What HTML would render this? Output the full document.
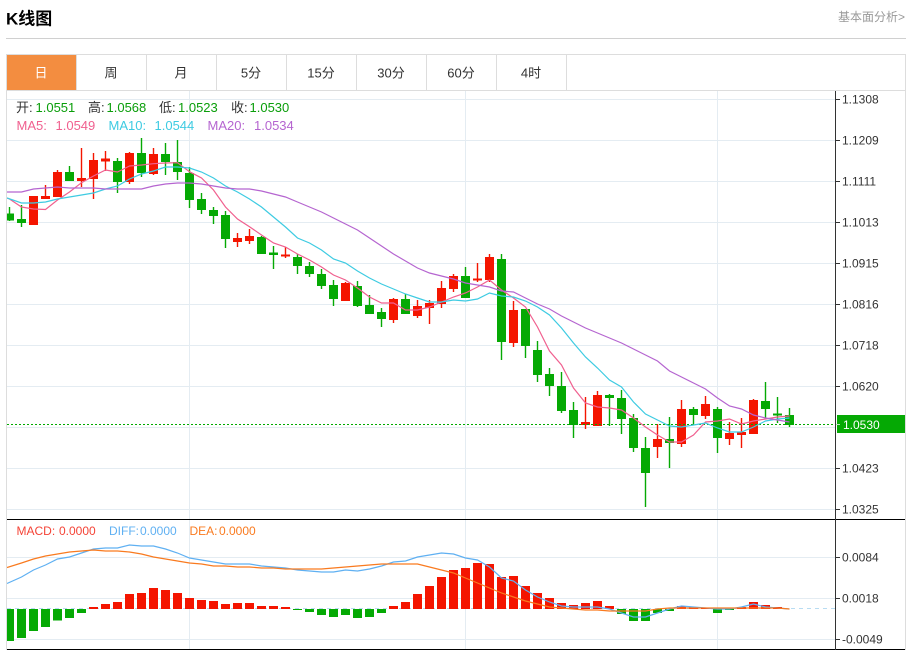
<!DOCTYPE html>
<html><head><meta charset="utf-8"><style>
html,body{margin:0;padding:0;background:#fff;width:909px;height:650px;overflow:hidden}
svg{position:absolute;left:0;top:0}
text{font-family:"Liberation Sans","Noto Sans CJK SC",sans-serif;font-size:12px}
.l{font-size:13px}
.ax{fill:#333}
.tab{font-size:13px;fill:#333;text-anchor:middle}
</style></head><body>
<svg width="909" height="650" viewBox="0 0 909 650" xmlns="http://www.w3.org/2000/svg">
<defs><clipPath id="c"><rect x="7" y="91" width="828" height="559"/></clipPath></defs>
<text x="6" y="24.500" style="font-size:17px;font-weight:bold" fill="#000">K线图</text>
<text x="905" y="21" text-anchor="end" fill="#999">基本面分析&gt;</text>
<path d="M6 38.500H906" stroke="#d0d0d0"/>
<rect x="6.500" y="54.500" width="899" height="595" fill="#fff" stroke="#ddd"/>
<rect x="7" y="55" width="69" height="35" fill="#f38d40"/>
<path d="M76.500 55V90M146.500 55V90M216.500 55V90M286.500 55V90M356.500 55V90M426.500 55V90M496.500 55V90M566.500 55V90M7 90.500H905" stroke="#ddd" fill="none"/>
<text class="tab" x="41" y="77.500" style="fill:#fff">日</text>
<text class="tab" x="111" y="77.500">周</text>
<text class="tab" x="181" y="77.500">月</text>
<text class="tab" x="251" y="77.500">5分</text>
<text class="tab" x="321" y="77.500">15分</text>
<text class="tab" x="391" y="77.500">30分</text>
<text class="tab" x="461" y="77.500">60分</text>
<text class="tab" x="531" y="77.500">4时</text>
<path d="M7 99.500H836M7 140.500H836M7 181.500H836M7 222.500H836M7 263.500H836M7 304.500H836M7 345.500H836M7 386.500H836M7 427.500H836M7 468.500H836M7 509.500H836M7 557.500H836M7 598.500H836M7 639.500H836M189.500 91V649M465.500 91V649M717.500 91V649" stroke="#e4ecf2" fill="none"/>
<g clip-path="url(#c)">
<path stroke="#05a904" stroke-width="1.400" fill="none" d="M9.500 207V221M21.500 205V227M69.500 166V181M117.500 158V193M141.500 138V177M165.500 143V175M177.500 140V180M189.500 167V208M201.500 193V214M213.500 207V224M225.500 211V248M261.500 236V254M273.500 246V269M297.500 254V274M309.500 262V277M321.500 269V289M333.500 280V306M357.500 281V307M369.500 295V314M381.500 308V327M405.500 294V314M465.500 267V298M501.500 254V360M525.500 309V358M537.500 341V382M549.500 368V396M561.500 372V413M573.500 402V438M609.500 394V426M621.500 390V434M633.500 414V452M645.500 437V507M669.500 417V468M693.500 407V425M717.500 407V453M765.500 382V418M777.500 397V423M789.500 408V427"/>
<path stroke="#f41500" stroke-width="1.400" fill="none" d="M33.500 196V225M45.500 185V199M57.500 170V197M81.500 148V187M93.500 153V199M105.500 151V171M129.500 152V184M153.500 148V175M237.500 233V247M249.500 229V244M285.500 247V258M345.500 282V301M393.500 298V323M417.500 300V318M429.500 300V324M441.500 281V308M453.500 274V292M477.500 263V282M489.500 254V282M513.500 301V347M585.500 397V429M597.500 391V426M657.500 424V458M681.500 400V447M705.500 396V419M729.500 422V445M741.500 418V448M753.500 399V434"/>
<path stroke="#05a904" stroke-width="9" fill="none" d="M9.500 213.500V220.500M21.500 219V223M69.500 172V181M117.500 161V182M141.500 153V173M165.500 154V162M177.500 162V172M189.500 173V200M201.500 199V210M213.500 210V216M225.500 215V239M261.500 237V254M273.500 252.500V255M297.500 257V266M309.500 266V274M321.500 274V286M333.500 285V299M357.500 286V306M369.500 305V314M381.500 312V319M405.500 299V314M465.500 276V298M501.500 259V342M525.500 309V346M537.500 350V375M549.500 374V386M561.500 386V411M573.500 410V425M609.500 395V398M621.500 398V419M633.500 418V448M645.500 448V473M669.500 439V443M693.500 409V415M717.500 409V438M765.500 401V409M777.500 413.500V415.500M789.500 415V425"/>
<path stroke="#f41500" stroke-width="9" fill="none" d="M33.500 196V225M45.500 196V199M57.500 172V197M81.500 178V181M93.500 160V179M105.500 158.500V161.500M129.500 153V182M153.500 154V174M237.500 238V242M249.500 236V241M285.500 254.500V256.500M345.500 283V301M393.500 299V320M417.500 306V316M429.500 303V308M441.500 288V304M453.500 276V289M477.500 278.500V280.500M489.500 257V280M513.500 310V343M585.500 422V425M597.500 395V426M657.500 439V447M681.500 409V444M705.500 404V416M729.500 433V439M741.500 432V435M753.500 400V434"/>
<path d="M7 424.500H836" stroke="#0a0" stroke-dasharray="2 2"/>
<path fill="none" stroke="#f0608f" stroke-width="1.200" d="M7 198L9.500 199L21.500 207L33.500 209L45.500 209.500L57.500 200L69.500 192L81.500 182.700L93.500 176L105.500 170L117.500 172L129.500 166L141.500 165L153.500 163.700L165.500 163L177.500 162.700L189.500 171.700L201.500 178L213.500 190L225.500 207L237.500 219L249.500 226.700L261.500 235L273.500 243L285.500 247L297.500 254L309.500 260L321.500 267L333.500 275L345.500 280L357.500 288L369.500 297L381.500 303L393.500 303L405.500 310L417.500 310L429.500 307L441.500 302L453.500 297L465.500 293L477.500 287L489.500 280L501.500 290L513.500 298L525.500 307L537.500 327L549.500 351L561.500 365L573.500 388L585.500 403L597.500 407L609.500 408L621.500 410L633.500 418L645.500 427L657.500 435L669.500 442L681.500 442L693.500 435L705.500 422L717.500 421L729.500 419L741.500 424L753.500 421L765.500 419L777.500 417L789.500 416"/>
<path fill="none" stroke="#3ecbe2" stroke-width="1.200" d="M7 198L21.500 203L33.500 203L45.500 202L57.500 199L69.500 197L81.500 195L93.500 193L105.500 189L117.500 186L129.500 179L141.500 174L153.500 171L165.500 167L177.500 167L189.500 168L201.500 172L213.500 178L225.500 186L237.500 192L249.500 199L261.500 207L273.500 217L285.500 227L297.500 238L309.500 243L321.500 250L333.500 259L345.500 263L357.500 271L369.500 278L381.500 284L393.500 289L405.500 294L417.500 298L429.500 302L441.500 302L453.500 300L465.500 301L477.500 299L489.500 293L501.500 296L513.500 297L525.500 301L537.500 307L549.500 315L561.500 328L573.500 343L585.500 357L597.500 368L609.500 380L621.500 387L633.500 402L645.500 414L657.500 420L669.500 426L681.500 427L693.500 425L705.500 423L717.500 428L729.500 432L741.500 432L753.500 427L765.500 421L777.500 419L789.500 418"/>
<path fill="none" stroke="#b565d0" stroke-width="1.200" d="M7 192L21.500 192L33.500 189L45.500 188L57.500 187L69.500 188L81.500 188L93.500 188L105.500 189L117.500 189L129.500 189L141.500 189L153.500 186L165.500 184L177.500 183L189.500 183L201.500 184L213.500 186L225.500 188L237.500 189L249.500 189L261.500 191L273.500 194L285.500 197L297.500 202L309.500 207L321.500 212L333.500 218L345.500 224L357.500 230L369.500 238L381.500 246L393.500 254L405.500 261L417.500 268L429.500 273L441.500 276L453.500 279L465.500 283L477.500 285L489.500 287L501.500 291L513.500 292L525.500 298L537.500 304L549.500 309L561.500 316L573.500 322L585.500 328L597.500 333L609.500 338L621.500 343L633.500 349L645.500 355L657.500 361L669.500 371L681.500 377L693.500 383L705.500 389L717.500 398L729.500 406L741.500 409L753.500 415L765.500 418L777.500 420L789.500 422"/>
<path d="M7 608.500H836" stroke="#b8dcf2" stroke-dasharray="4 4"/>
<path stroke="#05a904" stroke-width="9" fill="none" d="M9.500 609V641M21.500 609V638M33.500 609V631M45.500 609V627M57.500 609V620.500M69.500 609V618M81.500 609V613M297.500 609V610M309.500 609V612M321.500 609V615M333.500 609V617M345.500 609V615M357.500 609V618M369.500 609V617M381.500 609V613M621.500 609V614M633.500 609V621M645.500 609V621M657.500 609V613M669.500 609V611M717.500 609V613M729.500 609V610"/>
<path stroke="#f41500" stroke-width="9" fill="none" d="M93.500 607V609M105.500 604V609M117.500 602V609M129.500 594V609M141.500 593V609M153.500 588V609M165.500 590V609M177.500 593V609M189.500 598V609M201.500 600V609M213.500 601V609M225.500 604V609M237.500 603V609M249.500 603V609M261.500 606V609M273.500 606V609M285.500 607V609M393.500 606V609M405.500 602V609M417.500 594V609M429.500 586V609M441.500 577V609M453.500 570V609M465.500 568V609M477.500 563V609M489.500 564V609M501.500 577V609M513.500 576V609M525.500 586V609M537.500 593V609M549.500 598V609M561.500 603V609M573.500 605V609M585.500 603V609M597.500 601V609M609.500 606V609M681.500 606V609M693.500 607V609M705.500 608V609M741.500 607V609M753.500 602V609M765.500 605V609M777.500 607V609"/>
<path fill="none" stroke="#5fb0f2" stroke-width="1.200" d="M7 583.500L21.500 577L33.500 570L45.500 565L57.500 559L69.500 557L81.500 553L93.500 549L105.500 548L117.500 548L129.500 545L141.500 546L153.500 546L165.500 549L177.500 553L189.500 558L201.500 560L213.500 562L225.500 564L237.500 564L249.500 564L261.500 566L273.500 567L285.500 568L297.500 570L309.500 571L321.500 572L333.500 572L345.500 570L357.500 571L369.500 569L381.500 566L393.500 562L405.500 561L417.500 557L429.500 555L441.500 553L453.500 554L465.500 558L477.500 560L489.500 567L501.500 578L513.500 581L525.500 590L537.500 597L549.500 602L561.500 606L573.500 607L585.500 607L597.500 607L609.500 609L621.500 613L633.500 617L645.500 617L657.500 613L669.500 609L681.500 606L693.500 607L705.500 608L717.500 609L729.500 609L741.500 607L753.500 604L765.500 607L777.500 608L789.500 609"/>
<path fill="none" stroke="#f97a1f" stroke-width="1.200" d="M7 567.500L21.500 563L33.500 559L45.500 556L57.500 554L69.500 552L81.500 551L93.500 550L105.500 551L117.500 551L129.500 552L141.500 554L153.500 557L165.500 559L177.500 561L189.500 563L201.500 564L213.500 566L225.500 566L237.500 567L249.500 567L261.500 568L273.500 568L285.500 569L297.500 569L309.500 569L321.500 569L333.500 568L345.500 567L357.500 566L369.500 565L381.500 564L393.500 564L405.500 564L417.500 564L429.500 567L441.500 570L453.500 573L465.500 578L477.500 583L489.500 588L501.500 593L513.500 597L525.500 601L537.500 604L549.500 607L561.500 608L573.500 609L585.500 610L597.500 610L609.500 611L621.500 611L633.500 611L645.500 611L657.500 609L669.500 608L681.500 608L693.500 608L705.500 608L717.500 608L729.500 608L741.500 608L753.500 608L765.500 608L777.500 608L789.500 609"/>
</g>
<path d="M7 519.500H905M7 649.500H905" stroke="#000"/>
<path d="M835.500 91V650" stroke="#333"/>
<path d="M836 99.500H840M836 140.500H840M836 181.500H840M836 222.500H840M836 263.500H840M836 304.500H840M836 345.500H840M836 386.500H840M836 468.500H840M836 509.500H840M836 557.500H840M836 598.500H840M836 639.500H840" stroke="#333"/>
<rect x="837" y="415" width="68" height="18" fill="#05a904"/>
<path d="M836 424.500H840" stroke="#bde8bd"/>
<g class="ax">
<text x="842" y="103.500">1.1308</text><text x="842" y="144.500">1.1209</text><text x="842" y="185.500">1.1111</text><text x="842" y="226.500">1.1013</text><text x="842" y="267.500">1.0915</text><text x="842" y="308.500">1.0816</text><text x="842" y="349.500">1.0718</text><text x="842" y="390.500">1.0620</text><text x="842" y="472.500">1.0423</text><text x="842" y="513.500">1.0325</text>
<text x="842" y="561.500">0.0084</text><text x="842" y="602.500">0.0018</text><text x="842" y="643.500">-0.0049</text>
</g>
<text x="843" y="429" fill="#fff">1.0530</text>
<g class="l">
<text class="l" x="16" y="112" fill="#333">开:</text><text class="l" x="35.500" y="112" fill="#0a9e0a">1.0551</text>
<text class="l" x="88" y="112" fill="#333">高:</text><text class="l" x="106.500" y="112" fill="#0a9e0a">1.0568</text>
<text class="l" x="159" y="112" fill="#333">低:</text><text class="l" x="178" y="112" fill="#0a9e0a">1.0523</text>
<text class="l" x="231" y="112" fill="#333">收:</text><text class="l" x="249.500" y="112" fill="#0a9e0a">1.0530</text>
<text class="l" x="16.500" y="130" fill="#f0608f">MA5:</text><text class="l" x="55.500" y="130" fill="#f0608f">1.0549</text>
<text class="l" x="108.500" y="130" fill="#3ecbe2">MA10:</text><text class="l" x="154.500" y="130" fill="#3ecbe2">1.0544</text>
<text class="l" x="207.500" y="130" fill="#b565d0">MA20:</text><text class="l" x="254" y="130" fill="#b565d0">1.0534</text>
</g>
<text x="16.500" y="535" fill="#f44336">MACD:</text><text x="59" y="535" fill="#f44336">0.0000</text>
<text x="109" y="535" fill="#5fb0f2">DIFF:</text><text x="140" y="535" fill="#5fb0f2">0.0000</text>
<text x="189.500" y="535" fill="#f97a1f">DEA:</text><text x="219" y="535" fill="#f97a1f">0.0000</text>
</svg>
</body></html>
